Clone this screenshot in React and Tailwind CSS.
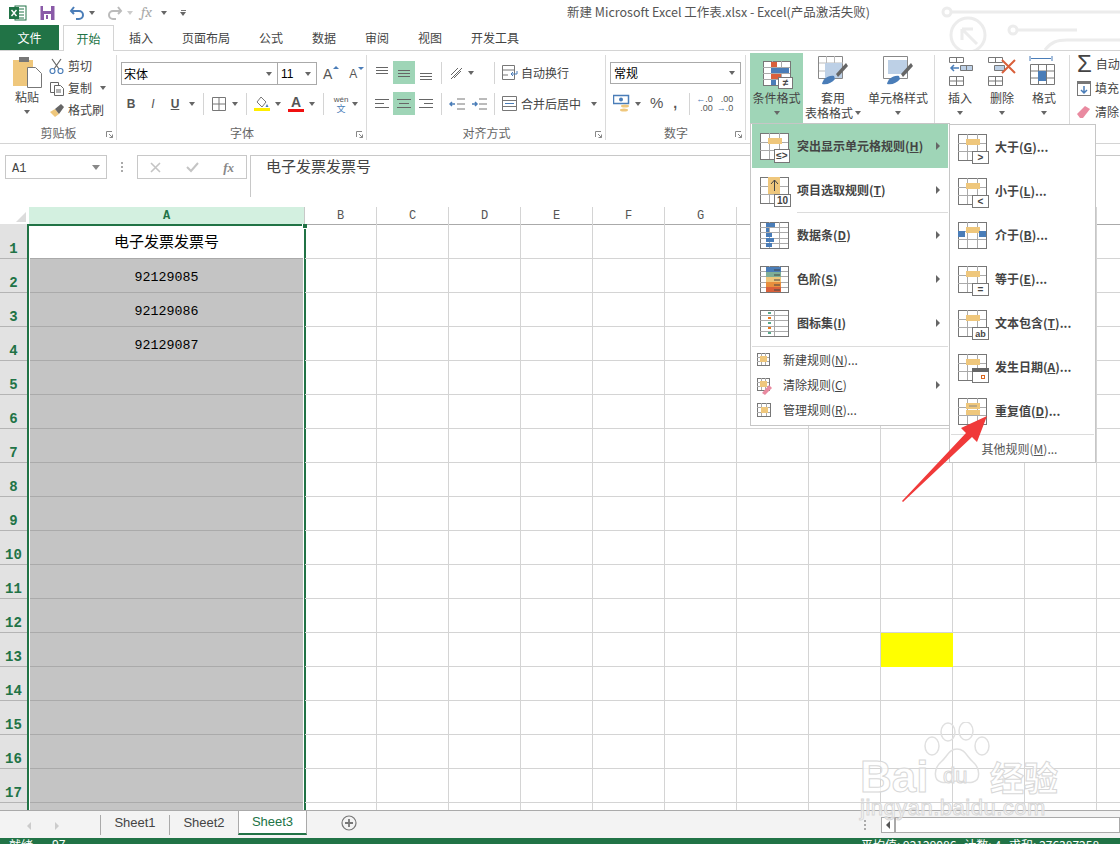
import React from 'react';

const CJK = { fontFamily: '"Noto Sans CJK SC", "Liberation Sans", sans-serif' };

const Caret = ({ className = '' }) => (
  <span className={`inline-block w-0 h-0 border-x-[3px] border-t-[4px] border-x-transparent border-t-[#666] ${className}`} />
);

const Vr = ({ h = 'h-[22px]' }) => <span className={`block w-px ${h} bg-[#d4d4d4] shrink-0`} />;

// lines icon for the alignment buttons
const Lines = ({ rows, active }) => (
  <span className={`w-[22px] h-[23px] flex items-center justify-center shrink-0 ${active ? 'bg-[#9fd5b7]' : ''}`}>
    <svg width="16" height="16" stroke="#666" strokeWidth="1">
      {rows.map(([x1, x2, y], i) => <line key={i} x1={x1} x2={x2} y1={y + 0.5} y2={y + 0.5} />)}
    </svg>
  </span>
);

// the small table drawing used by the menus
const TableIcon = ({ w = 28, h = 26, children, rows = 3, cols = 3 }) => (
  <svg width={w + 1} height={h + 1} className="overflow-visible">
    <rect x=".5" y=".5" width={w} height={h} fill="#fff" stroke="#777" />
    {Array.from({ length: rows - 1 }).map((_, i) => (
      <line key={i} x1="0" x2={w} y1={Math.round(((i + 1) * h) / rows) + 0.5} y2={Math.round(((i + 1) * h) / rows) + 0.5} stroke="#aaa" />
    ))}
    {Array.from({ length: cols - 1 }).map((_, i) => (
      <line key={i} y1="0" y2={h} x1={Math.round(((i + 1) * w) / cols) + 0.5} x2={Math.round(((i + 1) * w) / cols) + 0.5} stroke="#aaa" />
    ))}
    {children}
  </svg>
);

const Badge = ({ t, x = 14, y = 17, w = 16, h = 12, dy = 10, size = 10 }) => (
  <g>
    <rect x={x + 0.5} y={y + 0.5} width={w} height={h} fill="#fff" stroke="#777" />
    <text x={x + w / 2 + 0.5} y={y + dy} textAnchor="middle" fontSize={size} fill="#444" fontFamily="Liberation Sans, sans-serif" fontWeight="700">{t}</text>
  </g>
);

const Amber = () => <rect x="8" y="5" width="14" height="6" fill="#efc77c" />;

const U = ({ c }) => <span className="underline">{c}</span>;

const MenuItem = ({ icon, children, active, arrow, h = 'h-[44px]', bold = true, pl = 'pl-[8px]', tx = 'w-[37px]' }) => (
  <div className={`flex items-center ${h} ${pl} ${active ? 'bg-[#9fd5b7]' : ''}`}>
    <span className={`${tx} flex items-center shrink-0`}>{icon}</span>
    <span className={`text-[12px] whitespace-nowrap flex-1 text-[#444] ${bold ? 'font-bold' : ''}`}>{children}</span>
    {arrow && <span className="w-0 h-0 mr-[8px] border-y-[4px] border-l-[4px] border-y-transparent border-l-[#666]" />}
  </div>
);

const Sep = ({ ml = 'ml-0' }) => <div className={`h-px bg-[#dcdcdc] ${ml}`} />;

const RibbonGroup = ({ w, label, children }) => (
  <div className={`${w} shrink-0 h-full flex flex-col relative`}>
    <div className="flex-1 min-h-0">{children}</div>
    <div className="h-[20px] text-center text-[12px] leading-[20px] text-[#666]">{label}</div>
    <svg width="7" height="7" className="absolute right-[4px] bottom-[5px]" stroke="#888" fill="none">
      <path d="M.5 6V.5H6M3 3l3.5 3.5M6.5 3.5v3h-3" />
    </svg>
    <span className="absolute right-0 top-[4px] bottom-[3px] w-px bg-[#dadada]" />
  </div>
);

const BigBtn = ({ icon, label, label2, w, active }) => (
  <div className={`${w} flex flex-col items-center text-[12px] text-[#444] leading-[15px] shrink-0 ${active ? 'bg-[#9fd5b7] h-[72px]' : ''}`}>
    <span className="h-[33px] flex items-end">{icon}</span>
    <span className="mt-[4px] whitespace-nowrap">{label}</span>
    {label2 ? (
      <span className="whitespace-nowrap flex items-center gap-[2px]">{label2}<Caret /></span>
    ) : (
      <Caret className="mt-[6px]" />
    )}
  </div>
);

const COLS = ['B', 'C', 'D', 'E', 'F', 'G', 'H', 'I', 'J', 'K', 'L', 'M'];
const ROWS = Array.from({ length: 18 }, (_, i) => i + 1);
const DATA = { 1: '电子发票发票号', 2: '92129085', 3: '92129086', 4: '92129087' };

const MENU_RIGHT = [
  ['大', '于', 'G', <Badge t=">" key="a" />],
  ['小', '于', 'L', <Badge t="<" key="a" />],
  ['介', '于', 'B', <g key="a"><rect x="0" y="9" width="7" height="6" fill="#4a7db8" /><rect x="21" y="9" width="7" height="6" fill="#4a7db8" /></g>],
  ['等', '于', 'E', <Badge t="=" key="a" />],
  ['文本包', '含', 'T', <Badge t="ab" key="a" size={9} />],
  ['发生日', '期', 'A', <g key="a"><rect x="14.5" y="14.5" width="16" height="14" fill="#fff" stroke="#777" /><rect x="14" y="14" width="17" height="4" fill="#666" /><rect x="23.5" y="21.5" width="3" height="3" fill="#fff" stroke="#d9661f" /></g>],
  ['重复', '值', 'D', <g key="a"><rect x="8" y="12" width="14" height="5" fill="#efc77c" /><line x1="11" x2="19" y1="8" y2="8" stroke="#888" /></g>],
];

export default function App() {
  return (
    <div style={CJK} className="relative w-[1120px] h-[844px] overflow-hidden bg-white flex flex-col text-[#444]">
      {/* title bar */}
      <div className="h-[25px] shrink-0 flex items-center pl-[9px] relative">
        <svg width="18" height="16">
          <rect x="6" y="1" width="11" height="14" fill="#fff" stroke="#217346" />
          <path d="M10 4h5M10 7h5M10 10h5M10 13h5" stroke="#217346" />
          <rect x="0" y="2" width="10" height="12" fill="#217346" />
          <path d="M2.5 5l5 6M7.5 5l-5 6" stroke="#fff" strokeWidth="1.4" />
        </svg>
        <svg width="16" height="16" className="ml-[13px]">
          <rect x=".5" y="1" width="14" height="14" fill="#8a5aa8" />
          <rect x="3" y="1" width="8" height="5" fill="#fff" />
          <rect x="4" y="9" width="7" height="6" fill="#fff" />
          <rect x="6" y="10" width="2" height="4" fill="#8a5aa8" />
        </svg>
        <svg width="16" height="15" className="ml-[13px]" fill="none" stroke="#4a7db8" strokeWidth="2">
          <path d="M2 6h8a4 4 0 010 8H7M5 2L2 6l3 3" />
        </svg>
        <Caret className="ml-[4px]" />
        <svg width="16" height="15" className="ml-[12px]" fill="none" stroke="#bbb" strokeWidth="2">
          <path d="M14 6H6a4 4 0 000 8h3M11 2l3 4-3 3" />
        </svg>
        <Caret className="ml-[4px] border-t-[#ccc]" />
        <span className="ml-[8px] w-[16px] text-[15px] leading-none italic text-[#aaa] font-serif">fx</span>
        <Caret className="ml-[4px] border-t-[#555]" />
        <span className="ml-[13px] flex flex-col items-center gap-[1px]">
          <span className="w-[5px] h-px bg-[#777]" />
          <Caret />
        </span>
        <span className="absolute left-[567px] top-[4px] text-[12.5px] leading-[16px] text-[#555] whitespace-nowrap">新建 Microsoft Excel 工作表.xlsx - Excel(产品激活失败)</span>
        <svg width="180" height="50" className="absolute left-[940px] top-0" fill="none" stroke="#ececec" strokeWidth="3">
          <circle cx="7" cy="12" r="4" />
          <path d="M11 12h170" />
          <circle cx="28" cy="35" r="17" />
          <path d="M22 29h11M22 29v11M22 29l15 15" />
          <circle cx="73" cy="30" r="4" />
          <path d="M77 30h60" />
          <path d="M105 50c6-8 12-10 22-10h60" />
        </svg>
      </div>

      {/* tabs */}
      <div className="h-[26px] shrink-0 flex items-stretch text-[12px] relative">
        <div className="w-[59px] h-[25px] bg-[#217346] text-white flex items-center justify-center">文件</div>
        <div className="ml-[4px] w-[51px] h-[26px] bg-white border border-b-0 border-[#d4d4d4] text-[#217346] flex items-center justify-center z-10">开始</div>
        <div className="ml-[15px] flex items-center gap-[29px] h-[25px] text-[#444]">
          {['插入', '页面布局', '公式', '数据', '审阅', '视图', '开发工具'].map((t) => <span key={t}>{t}</span>)}
        </div>
      </div>

      {/* ribbon */}
      <div className="h-[94px] shrink-0 -mt-px border-y border-[#d4d4d4] flex bg-white text-[#444]">
        <RibbonGroup w="w-[117px]" label="剪贴板">
          <div className="flex pl-[12px] pt-[6px]">
            <div className="w-[30px] flex flex-col items-center text-[12px]">
              <svg width="29" height="32">
                <rect x="0" y="3" width="20" height="26" fill="#efc77c" />
                <rect x="6" y="0" width="10" height="5" fill="#777" />
                <path d="M14.5 10.500h8l6 6v14h-14z" fill="#fff" stroke="#777" />
              </svg>
              <span className="leading-[16px] whitespace-nowrap">粘贴</span>
              <Caret className="mt-[5px]" />
            </div>
            <div className="ml-[7px] flex flex-col text-[12px] leading-[16px] gap-[6px] pt-[2px]">
              <div className="flex items-center gap-[4px] h-[16px] -mt-[1px]">
                <svg width="15" height="16" fill="none" stroke="#666" strokeWidth="1.2">
                  <path d="M3 1l7 10M12 1L5 11" />
                  <circle cx="3.5" cy="13" r="2.5" stroke="#4a7db8" />
                  <circle cx="11.5" cy="13" r="2.5" stroke="#4a7db8" />
                </svg>
                剪切
              </div>
              <div className="flex items-center gap-[4px] h-[16px]">
                <svg width="15" height="15" fill="#fff" stroke="#666">
                  <path d="M1.5 1.5h8v10h-8z" />
                  <path d="M5.5 4.5h6l3 3v7h-9z" />
                  <path d="M7 9h5M7 11h5" />
                </svg>
                复制<Caret className="ml-[4px]" />
              </div>
              <div className="flex items-center gap-[4px] h-[16px]">
                <svg width="15" height="15">
                  <path d="M1 9l5-3 4 5-4 3z" fill="#efc77c" />
                  <path d="M6 6l6-5 3 3-5 7z" fill="#666" />
                </svg>
                格式刷
              </div>
            </div>
          </div>
        </RibbonGroup>

        <RibbonGroup w="w-[250px]" label="字体">
          <div className="pl-[4px] pt-[11px]">
            <div className="flex items-center h-[23px]">
              <div className="w-[157px] h-[23px] border border-[#aaa] flex items-center justify-between px-[2px] pr-[5px] text-[12px] text-black">宋体<Caret /></div>
              <div className="w-[40px] h-[23px] -ml-px border border-[#aaa] flex items-center justify-between pl-[3px] pr-[5px] text-[12px] text-black font-['Liberation_Sans']">11<Caret /></div>
              <span className="ml-[6px] text-[14px] text-[#555] font-['Liberation_Sans'] leading-none relative">A<span className="absolute -top-[1px] -right-[7px] w-0 h-0 border-x-[3px] border-b-[3px] border-x-transparent border-b-[#4a7db8]" /></span>
              <span className="ml-[17px] text-[12px] text-[#555] font-['Liberation_Sans'] leading-none relative">A<span className="absolute -top-[1px] -right-[7px] w-0 h-0 border-x-[3px] border-t-[3px] border-x-transparent border-t-[#4a7db8]" /></span>
            </div>
            <div className="flex items-center h-[23px] mt-[7px] text-[#555] font-['Liberation_Sans'] text-[12px]">
              <span className="ml-[2px] w-[16px] text-center font-bold">B</span>
              <span className="ml-[6px] w-[16px] text-center italic">I</span>
              <span className="ml-[6px] w-[16px] text-center font-bold underline">U</span>
              <Caret className="ml-[6px]" />
              <span className="ml-[8px]"><Vr /></span>
              <svg width="14" height="14" className="ml-[8px]" fill="none" stroke="#777"><path d="M.5.500h13v13H.5zM7 0v14M0 7h14" /></svg>
              <Caret className="ml-[6px]" />
              <span className="ml-[8px]"><Vr /></span>
              <span className="ml-[7px] w-[16px] flex flex-col items-center">
                <svg width="16" height="12" fill="none" stroke="#777"><path d="M7 1l5 5-4 5-5-5z" /><path d="M13 8l1.500 3h-3z" fill="#4a7db8" stroke="none" /></svg>
                <span className="w-[16px] h-[3px] bg-[#ffee00]" />
              </span>
              <Caret className="ml-[5px]" />
              <span className="ml-[7px] w-[16px] flex flex-col items-center leading-[12px]">
                <span className="text-[14px] h-[13px] leading-[13px] font-bold">A</span>
                <span className="w-[16px] h-[3px] bg-[#f01010]" />
              </span>
              <Caret className="ml-[5px]" />
              <span className="ml-[8px]"><Vr /></span>
              <span className="ml-[8px] w-[18px] flex flex-col items-center text-[8px] leading-[9px]">
                <span>wén</span>
                <span style={CJK} className="text-[#4a7db8] text-[9px]">文</span>
              </span>
              <Caret className="ml-[2px]" />
            </div>
          </div>
        </RibbonGroup>

        <RibbonGroup w="w-[239px]" label="对齐方式">
          <div className="pl-[4px] pt-[10px]">
            <div className="flex items-center h-[23px]">
              <Lines rows={[[2, 14, 2], [2, 14, 5], [2, 14, 8]]} />
              <Lines active rows={[[2, 14, 5], [2, 14, 8], [2, 14, 11]]} />
              <Lines rows={[[2, 14, 8], [2, 14, 11], [2, 14, 14]]} />
              <span className="ml-[4px]"><Vr /></span>
              <svg width="16" height="16" className="ml-[7px]" fill="none" stroke="#666"><path d="M2 10l7-7M5 13l7-7M2 14l11-11" /></svg>
              <Caret className="ml-[3px]" />
              <span className="ml-[20px]"><Vr /></span>
              <svg width="16" height="15" className="ml-[7px]" fill="none" stroke="#777"><path d="M.5.500h12v14H.5zM1 5h11M1 10h5" /><path d="M15 6v3h-6M11 7l-2 2 2 2" stroke="#4a7db8" /></svg>
              <span className="ml-[3px] text-[12px] whitespace-nowrap">自动换行</span>
            </div>
            <div className="flex items-center h-[23px] mt-[8px]">
              <Lines rows={[[1, 15, 3], [1, 10, 7], [1, 15, 11]]} />
              <Lines active rows={[[1, 15, 3], [3, 13, 7], [1, 15, 11]]} />
              <Lines rows={[[1, 15, 3], [6, 15, 7], [1, 15, 11]]} />
              <span className="ml-[4px]"><Vr /></span>
              <svg width="16" height="14" className="ml-[7px]" fill="none" stroke="#777"><path d="M8 2h8M8 7h8M8 12h8" /><path d="M6 7H1M3 5L1 7l2 2" stroke="#4a7db8" strokeWidth="1.500" /></svg>
              <svg width="16" height="14" className="ml-[6px]" fill="none" stroke="#777"><path d="M8 2h8M8 7h8M8 12h8" /><path d="M1 7h5M4 5l2 2-2 2" stroke="#4a7db8" strokeWidth="1.500" /></svg>
              <span className="ml-[7px]"><Vr /></span>
              <svg width="15" height="15" className="ml-[7px]" fill="none" stroke="#777"><path d="M.5.500h14v14H.5zM1 4.500h13M1 10.500h13" /><path d="M3 7.500h9" stroke="#4a7db8" /></svg>
              <span className="ml-[4px] text-[12px] whitespace-nowrap">合并后居中</span>
              <Caret className="ml-[10px]" />
            </div>
          </div>
        </RibbonGroup>

        <RibbonGroup w="w-[140px]" label="数字">
          <div className="pl-[4px] pt-[11px]">
            <div className="w-[131px] h-[22px] border border-[#aaa] flex items-center justify-between pl-[3px] pr-[5px] text-[12px] text-black">常规<Caret /></div>
            <div className="flex items-center h-[23px] mt-[8px] text-[#555]">
              <svg width="17" height="19" className="ml-[3px]">
                <rect x=".5" y="1.500" width="15" height="8" fill="#fff" stroke="#4a7db8" strokeWidth="1.500" />
                <circle cx="8" cy="5.500" r="2" fill="#4a7db8" />
                <ellipse cx="12" cy="12" rx="4" ry="1.500" fill="#efc77c" />
                <ellipse cx="11" cy="16" rx="4" ry="1.500" fill="#efc77c" />
              </svg>
              <Caret className="ml-[5px]" />
              <span className="ml-[9px] text-[15px] font-['Liberation_Sans']">%</span>
              <span className="ml-[10px] text-[14px] font-bold font-['Liberation_Sans']">,</span>
              <span className="ml-[12px]"><Vr /></span>
              <span className="ml-[6px] text-[9px] leading-[9px] text-right font-['Liberation_Sans'] whitespace-nowrap"><span className="text-[#4a7db8]">←</span>.0<br />.00</span>
              <span className="ml-[4px] text-[9px] leading-[9px] text-right font-['Liberation_Sans'] whitespace-nowrap">.00<br /><span className="text-[#4a7db8]">→</span>.0</span>
            </div>
          </div>
        </RibbonGroup>

        <RibbonGroup w="w-[189px]" label="">
          <div className="flex pl-[4px] pt-[2px] gap-[1px]">
            <BigBtn w="w-[53px]" active label="条件格式" icon={
              <TableIcon w={27} h={24} rows={4}>
                <rect x="8" y="1" width="6" height="5" fill="#d9603b" />
                <rect x="8" y="7" width="18" height="5" fill="#4a7db8" />
                <rect x="8" y="13" width="10" height="5" fill="#d9603b" />
                <rect x="8" y="19" width="5" height="5" fill="#4a7db8" />
                <Badge t="≠" x={15} y={16} w={14} h={11} dy={9} />
              </TableIcon>
            } />
            <BigBtn w="w-[58px]" label="套用" label2="表格格式" icon={
              <svg width="30" height="30" fill="none">
                <path d="M.5.500h24v22H.5z" stroke="#888" />
                <path d="M1 7h24M1 15h24M8.500 0v23M16.500 0v23" stroke="#bbb" />
                <rect x="7" y="7" width="17" height="15" fill="#bdd0e6" />
                <path d="M18 18L28 7l2 3-10 11" fill="#666" />
                <path d="M4 28c1-5 6-9 12-8l1 3c-3 4-8 6-13 5z" fill="#4a7db8" />
              </svg>
            } />
            <BigBtn w="w-[70px]" label="单元格样式" icon={
              <svg width="30" height="30" fill="none">
                <path d="M.5.500h24v22H.5z" stroke="#888" />
                <rect x="5" y="4" width="19" height="14" fill="#bdd0e6" />
                <path d="M18 18L28 7l2 3-10 11" fill="#666" />
                <path d="M4 28c1-5 6-9 12-8l1 3c-3 4-8 6-13 5z" fill="#4a7db8" />
              </svg>
            } />
          </div>
        </RibbonGroup>

        <RibbonGroup w="w-[135px]" label="">
          <div className="flex pl-[9px] pt-[2px] gap-[10px]">
            <BigBtn w="w-[32px]" label="插入" icon={
              <svg width="28" height="30" fill="none" stroke="#777">
                <path d="M3.500 1.500h14v5h-14zM10.500 1v5M3.500 20.500h14v9h-14zM3 25h15M10.500 20v9" />
                <path d="M14.500 9.500h12v5h-12zM20.500 9v5" fill="#bdd0e6" />
                <path d="M13 12H5M8 9l-3 3 3 3" stroke="#4a7db8" strokeWidth="1.500" />
              </svg>
            } />
            <BigBtn w="w-[32px]" label="删除" icon={
              <svg width="32" height="30" fill="none" stroke="#777">
                <path d="M2.500 1.500h14v5h-14zM9.500 1v5M2.500 20.500h14v9h-14zM2 25h15M9.500 20v9" />
                <path d="M8.500 9.500h10v5h-10z" fill="#bdd0e6" />
                <path d="M16 4l13 13M29 4L16 17" stroke="#d9603b" strokeWidth="2" />
              </svg>
            } />
            <BigBtn w="w-[32px]" label="格式" icon={
              <svg width="30" height="31" fill="none" stroke="#777">
                <path d="M1 1v5M23 1v5M2 3.500h20" stroke="#4a7db8" />
                <path d="M1.500 9.500h24v20h-24zM1 16h25M1 23h25M9.500 9v21M17.500 9v21" />
                <rect x="9" y="16" width="8" height="10" fill="#4a7db8" stroke="none" />
              </svg>
            } />
          </div>
        </RibbonGroup>

        <div className="flex-1 pl-[7px] pt-[3px] text-[12px] overflow-hidden whitespace-nowrap flex flex-col gap-[8px]">
          <div className="flex items-center gap-[4px] h-[16px] mt-[2px]"><span className="text-[24px] leading-none font-['Liberation_Sans'] text-[#444]">Σ</span>自动</div>
          <div className="flex items-center gap-[4px] h-[16px]">
            <svg width="14" height="15" fill="none"><rect x=".5" y=".5" width="13" height="14" stroke="#777" /><rect x="0" y="0" width="14" height="3" fill="#777" /><path d="M7 5v7M4 9l3 3 3-3" stroke="#4a7db8" strokeWidth="1.500" /></svg>
            填充
          </div>
          <div className="flex items-center gap-[4px] h-[16px]">
            <svg width="14" height="14"><path d="M0 9l8-8 5 3-7 9H3z" fill="#e98aa0" /></svg>
            清除
          </div>
        </div>
      </div>

      {/* formula bar */}
      <div className="h-[42px] mt-[11px] shrink-0 flex items-start">
        <div className="ml-[5px] w-[102px] h-[24px] border border-[#c8c8c8] flex items-center justify-between px-[6px] pt-[3px] text-[12px] font-['Liberation_Mono']">A1<Caret className="border-x-[4px] border-t-[5px] border-t-[#888] -mt-[3px]" /></div>
        <div className="w-[30px] h-[24px] flex flex-col items-center justify-center gap-[2px]">
          <span className="w-[2px] h-[2px] bg-[#aaa]" /><span className="w-[2px] h-[2px] bg-[#aaa]" /><span className="w-[2px] h-[2px] bg-[#aaa]" />
        </div>
        <div className="w-[110px] h-[24px] border border-[#c8c8c8] flex items-center justify-between px-[12px] text-[#bbb]">
          <svg width="11" height="11" stroke="#c4c4c4" strokeWidth="1.600"><path d="M1 1l9 9M10 1l-9 9" /></svg>
          <svg width="13" height="11" fill="none" stroke="#c4c4c4" strokeWidth="2"><path d="M1 5l4 4 7-8" /></svg>
          <span className="font-['Liberation_Serif'] italic font-bold text-[13px] text-[#888] leading-none">fx</span>
        </div>
        <div className="ml-[3px] flex-1 h-[42px] border-l border-t border-[#c8c8c8] text-[15px] leading-[20px] pl-[15px] text-[#444]">电子发票发票号</div>
      </div>

      {/* sheet */}
      <div className="mt-[10px] flex-1 min-h-0 overflow-hidden relative">
        <div className="h-[17px] flex border-b border-[#aaa] box-content -mb-px">
          <div className="w-[29px] bg-white shrink-0 flex justify-end items-end pr-[3px] pb-[2px]">
            <span className="w-0 h-0 border-l-[10px] border-b-[10px] border-l-transparent border-b-[#dcdcdc]" />
          </div>
          <div className="w-[276px] shrink-0 bg-[#d3f0e0] text-center text-[12px] font-bold text-[#217346] font-['Liberation_Mono'] border-r border-[#c8c8c8]">A</div>
          {COLS.map((c) => (
            <div key={c} className="w-[72px] shrink-0 text-center text-[12px] text-[#555] font-['Liberation_Mono'] border-r border-[#d4d4d4]">{c}</div>
          ))}
        </div>
        {ROWS.map((r) => (
          <div key={r} className={`flex ${r === 1 ? 'h-[35px]' : 'h-[34px]'}`}>
            <div className="w-[27px] shrink-0 bg-[#e2e2e2] border-b border-[#b4b4b4] text-center text-[14px] font-bold text-[#217346] font-['Liberation_Mono'] flex items-end justify-center leading-[17px]">{r}</div>
            <div className={`w-[279px] shrink-0 border-x-[2px] border-[#217346] bg-white px-[1px] ${r === 1 ? 'border-t-[2px]' : ''}`}>
              <div className={`h-full flex items-center justify-center text-black ${r === 1 ? 'text-[15px] border-b border-[#aaa] pb-[2px]' : 'bg-[#c4c4c4] border-b border-[#aaa] text-[13.3px] pt-[4px] font-["Liberation_Mono"]'}`}>{DATA[r]}</div>
            </div>
            {COLS.map((c) => (
              <div key={c} className={`w-[72px] shrink-0 border-r border-b ${r === 13 && c === 'J' ? 'bg-[#ffff00] border-[#ffff00]' : 'border-[#d4d4d4]'} ${c === 'B' ? '-ml-px' : ''}`} />
            ))}
          </div>
        ))}
        <span className="absolute left-[302px] top-[17px] w-[5px] h-[5px] bg-[#217346] border-l border-b border-white" />
      </div>

      {/* sheet tabs */}
      <div className="h-[28px] shrink-0 border-t border-[#aaa] bg-[#f3f3f3] flex items-start text-[13px] font-['Liberation_Sans'] relative">
        <span className="ml-[27px] mt-[11px] w-0 h-0 border-y-[4px] border-r-[4px] border-y-transparent border-r-[#ccc]" />
        <span className="ml-[24px] mt-[11px] w-0 h-0 border-y-[4px] border-l-[4px] border-y-transparent border-l-[#ccc]" />
        <span className="ml-[41px] mt-[4px] w-px h-[20px] bg-[#aaa]" />
        <span className="w-[68px] h-[24px] mt-[1px] text-center leading-[22px] text-[#444]">Sheet1</span>
        <span className="mt-[4px] w-px h-[20px] bg-[#aaa]" />
        <span className="w-[68px] h-[24px] mt-[1px] text-center leading-[22px] text-[#444]">Sheet2</span>
        <span className="w-[69px] h-[24px] bg-white border-x border-[#aaa] border-b-2 border-b-[#217346] text-center leading-[22px] text-[#217346]">Sheet3</span>
        <svg width="16" height="16" className="ml-[34px] mt-[4px]" fill="none" stroke="#777" strokeWidth="1.200">
          <circle cx="8" cy="8" r="7" />
          <path d="M8 4v8M4 8h8" strokeWidth="1.800" />
        </svg>
        <span className="absolute left-[864px] top-[9px] flex flex-col gap-[2px]">
          <span className="w-[2px] h-[2px] bg-[#aaa]" /><span className="w-[2px] h-[2px] bg-[#aaa]" /><span className="w-[2px] h-[2px] bg-[#aaa]" />
        </span>
        <div className="absolute left-[881px] top-[6px] w-[239px] h-[16px] bg-white border border-[#aaa] flex">
          <span className="w-[14px] border-r-2 border-[#aaa] flex items-center justify-center">
            <span className="w-0 h-0 border-y-[4px] border-r-[4px] border-y-transparent border-r-[#555]" />
          </span>
        </div>
      </div>

      {/* status bar, cut off by the window */}
      <div className="h-[6px] shrink-0 bg-[#217346] text-white text-[12px] leading-[12px] overflow-hidden relative">
        <span className="absolute left-[9px] top-[1px]">就绪</span>
        <span className="absolute left-[52px] top-[1px] font-['Liberation_Sans']">97</span>
        <span className="absolute left-[861px] top-[1px] whitespace-nowrap">平均值: 92129086 &nbsp; 计数: 4 &nbsp; 求和: 276387258</span>
      </div>

      {/* conditional format menu */}
      <div className="absolute left-[750px] top-[123px] w-[200px] h-[303px] bg-white border border-[#c6c6c6] px-px z-20">
        <MenuItem active arrow icon={<TableIcon><Amber /><Badge t="≤>" x={14} y={16} w={15} h={13} /></TableIcon>}>突出显示单元格规则(<U c="H" />)</MenuItem>
        <MenuItem arrow icon={
          <TableIcon>
            <rect x="8" y="0" width="12" height="17" fill="#efc77c" />
            <path d="M14.500 14V3M11 7l3.500-4L18 7" fill="none" stroke="#444" />
            <Badge t="10" x={14} y={17} />
          </TableIcon>
        }>项目选取规则(<U c="T" />)</MenuItem>
        <Sep ml="ml-[45px]" />
        <MenuItem arrow icon={
          <TableIcon rows={5}>
            <rect x="6" y="1" width="9" height="4" fill="#4a7db8" /><rect x="6" y="6" width="3" height="4" fill="#4a7db8" />
            <rect x="6" y="11" width="6" height="4" fill="#4a7db8" /><rect x="6" y="16" width="8" height="4" fill="#4a7db8" />
            <rect x="6" y="21" width="6" height="4" fill="#4a7db8" />
          </TableIcon>
        }>数据条(<U c="D" />)</MenuItem>
        <MenuItem arrow icon={
          <TableIcon rows={5}>
            <rect x="6" y="1" width="15" height="5" fill="#4a7db8" /><rect x="6" y="6" width="15" height="5" fill="#7fae96" />
            <rect x="6" y="11" width="15" height="5" fill="#efc77c" /><rect x="6" y="16" width="15" height="5" fill="#e88f3e" />
            <rect x="6" y="21" width="15" height="5" fill="#d9603b" />
            <path d="M14 4h6M14 9h6M14 14h6M14 19h6M14 24h6" stroke="#444" />
          </TableIcon>
        }>色阶(<U c="S" />)</MenuItem>
        <MenuItem arrow icon={
          <TableIcon rows={5} cols={2}>
            <rect x="8" y="2" width="3" height="2" fill="#5aa78a" /><rect x="8" y="7" width="3" height="2" fill="#e8791d" />
            <rect x="8" y="12" width="3" height="2" fill="#5aa78a" /><rect x="8" y="17" width="3" height="2" fill="#e8791d" />
            <rect x="8" y="22" width="3" height="2" fill="#5aa78a" />
          </TableIcon>
        }>图标集(<U c="I" />)</MenuItem>
        <Sep ml="mt-[1px]" />
        <MenuItem h="h-[25px]" bold={false} pl="pl-[5px]" tx="w-[26px]" icon={<TableIcon w={12} h={12}><rect x="3" y="3" width="7" height="6" fill="#efc77c" /></TableIcon>}>新建规则(<U c="N" />)...</MenuItem>
        <MenuItem h="h-[25px]" arrow bold={false} pl="pl-[5px]" tx="w-[26px]" icon={<TableIcon w={12} h={12}><rect x="3" y="3" width="7" height="6" fill="#efc77c" /><path d="M5 15l7-8 3 3-7 7z" fill="#e98aa0" /></TableIcon>}>清除规则(<U c="C" />)</MenuItem>
        <MenuItem h="h-[25px]" bold={false} pl="pl-[5px]" tx="w-[26px]" icon={<TableIcon w={13} h={13}><rect x="4" y="4" width="7" height="6" fill="#efc77c" /></TableIcon>}>管理规则(<U c="R" />)...</MenuItem>
      </div>

      {/* highlight cells submenu */}
      <div className="absolute left-[949px] top-[124px] w-[147px] h-[339px] bg-white border border-[#c6c6c6] z-20">
        {MENU_RIGHT.map(([a, b, key, icon]) => (
          <MenuItem key={key} icon={<TableIcon><Amber />{icon}</TableIcon>}>{a}{b}(<U c={key} />)...</MenuItem>
        ))}
        <Sep ml="mx-[1px] mt-[1px]" />
        <div className="h-[28px] text-[12px] text-[#555] text-center leading-[28px] pr-[6px]">其他规则(<U c="M" />)...</div>
      </div>

      {/* red arrow drawn on the screenshot */}
      <svg width="100" height="100" className="absolute left-[895px] top-[408px] z-30">
        <polygon points="7,93 71,25 66,20 92,8 82,34 77,29 8,94" fill="#f03a3a" />
      </svg>

      {/* baidu watermark */}
      <div className="absolute left-[860px] top-[722px] w-[230px] h-[102px] z-10 pointer-events-none">
        <svg width="70" height="70" className="absolute left-[62px] top-0" fill="none" stroke="#e0e0e0" strokeWidth="1.500">
          <ellipse cx="10" cy="24" rx="7" ry="9" />
          <ellipse cx="26" cy="10" rx="7" ry="9" />
          <ellipse cx="44" cy="9" rx="7" ry="9" />
          <ellipse cx="60" cy="24" rx="7" ry="9" />
          <path d="M35 27c-8 0-10 8-16 13-7 6-8 18 0 20 6 2 10-1 16-1s10 3 16 1c8-2 7-14 0-20-6-5-8-13-16-13z" />
        </svg>
        <span className="absolute left-[0px] top-[30px] text-[44px] leading-[50px] font-bold font-['Liberation_Sans'] text-white/70 [-webkit-text-stroke:1px_#d8d8d8] whitespace-nowrap">Bai</span>
        <span className="absolute left-[83px] top-[42px] text-[22px] leading-[24px] font-['Liberation_Sans'] text-white/70 [-webkit-text-stroke:1px_#d8d8d8]">du</span>
        <span className="absolute left-[130px] top-[30px] text-[34px] leading-[50px] font-bold text-white/70 [-webkit-text-stroke:1px_#d8d8d8] whitespace-nowrap">经验</span>
        <span className="absolute left-[0px] top-[72px] text-[22px] leading-[28px] font-['Liberation_Sans'] text-white/60 [-webkit-text-stroke:1px_#d8d8d8] whitespace-nowrap tracking-[0.5px]">jingyan.baidu.com</span>
      </div>
    </div>
  );
}
